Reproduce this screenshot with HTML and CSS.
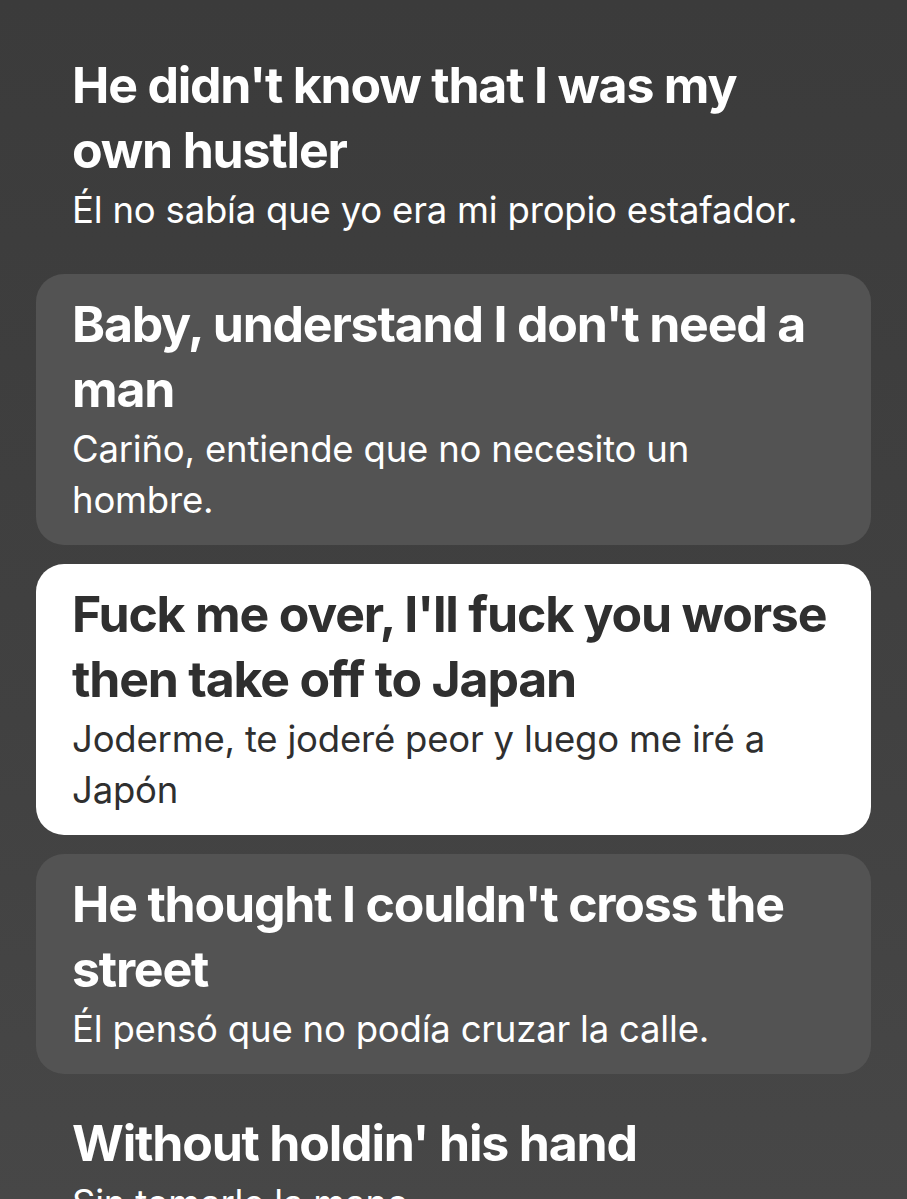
FILE: index.html
```html
<!DOCTYPE html>
<html lang="es">
<head>
  <meta charset="UTF-8" />
  <title>Letras</title>
  <link rel="stylesheet" href="styles.css">
</head>
<body>

  <div class="letras">
    <div class="linea">
      <div class="original">He didn't know that I was my own hustler</div>
      <div class="traduccion">Él no sabía que yo era mi propio estafador.</div>
    </div>

    <div class="linea tarjeta">
      <div class="original">Baby, understand I don't need a man</div>
      <div class="traduccion">Cariño, entiende que no necesito un hombre.</div>
    </div>

    <div class="linea tarjeta activa">
      <div class="original">Fuck me over, I'll fuck you worse then take off to Japan</div>
      <div class="traduccion">Joderme, te joderé peor y luego me iré a Japón</div>
    </div>

    <div class="linea tarjeta">
      <div class="original">He thought I couldn't cross the street</div>
      <div class="traduccion">Él pensó que no podía cruzar la calle.</div>
    </div>

    <div class="linea">
      <div class="original">Without holdin' his hand</div>
      <div class="traduccion">Sin tomarle la mano.</div>
    </div>
  </div>

</body>
</html>
```

FILE: styles.css
```css
body {
  font-family: Inter, "Noto Sans", sans-serif;
  margin: 0;
  height: 1199px;
  overflow: hidden;
  background: linear-gradient(to bottom, #3b3b3b 0%, #414141 60%, #474747 100%);
  color: #ffffff;
}

.letras {
  display: flex;
  flex-direction: column;
  gap: 19px;
  padding: 35px 36px 0 36px;
}

.linea {
  padding: 18px 36px 19px 36px;
  border-radius: 28px;
}

.tarjeta {
  background-color: #535353;
}

.activa {
  background-color: #ffffff;
  color: #2f2f2f;
}

.original {
  font-size: 50px;
  line-height: 65px;
  font-weight: 700;
  letter-spacing: -1.2px;
}

.traduccion {
  margin-top: 2px;
  font-size: 36.5px;
  line-height: 51px;
  font-weight: 400;
  letter-spacing: -0.2px;
}
```
